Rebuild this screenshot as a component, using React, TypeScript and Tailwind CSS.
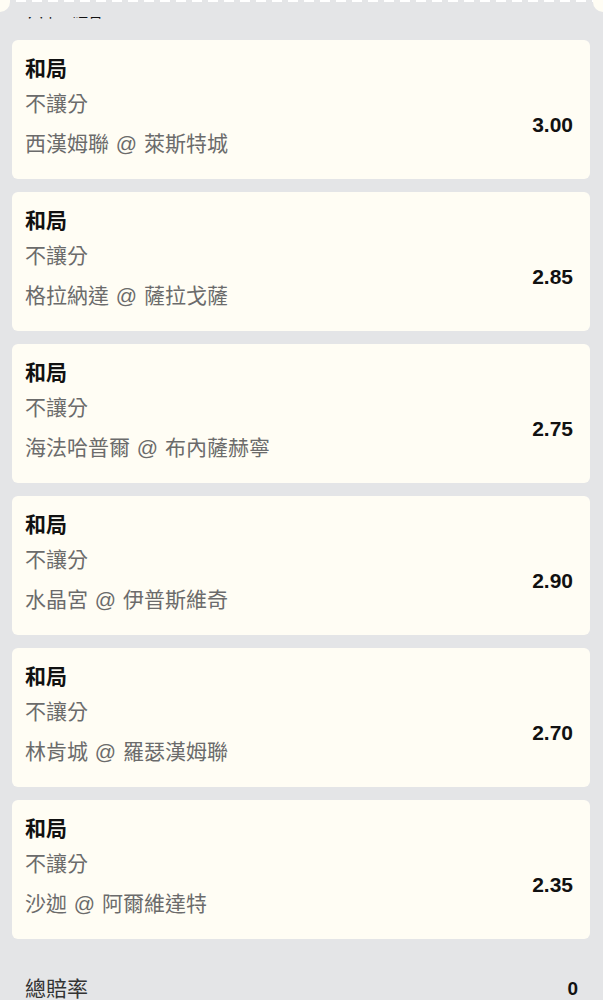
const BETS = [
  { home: '西漢姆聯', away: '萊斯特城', odds: '3.00' },
  { home: '格拉納達', away: '薩拉戈薩', odds: '2.85' },
  { home: '海法哈普爾', away: '布內薩赫寧', odds: '2.75' },
  { home: '水晶宮', away: '伊普斯維奇', odds: '2.90' },
  { home: '林肯城', away: '羅瑟漢姆聯', odds: '2.70' },
  { home: '沙迦', away: '阿爾維達特', odds: '2.35' },
];

function BetCard({ home, away, odds }: { home: string; away: string; odds: string }) {
  return (
    <div className="flex bg-[#fffdf4] rounded-[6px] pl-[13px] pr-[17px] pt-[14px] pb-[20px]">
      <div className="flex-1 min-w-0 flex flex-col">
        <div className="h-[30px] leading-[30px] text-[21px] font-bold text-[#111]">和局</div>
        <div className="h-[30px] leading-[30px] mt-[5px] text-[21px] text-[#6b6b6b]">不讓分</div>
        <div className="h-[30px] leading-[30px] mt-[10px] text-[21px] text-[#6b6b6b]">
          {home} <span className="mx-[1px]">@</span> {away}
        </div>
      </div>
      <div className="self-center mt-[36px] text-[21px] font-bold text-[#111]">{odds}</div>
    </div>
  );
}

export default function App() {
  return (
    <div
      className="relative w-[603px] h-[1000px] overflow-hidden bg-[#e4e5e7]"
      style={{ fontFamily: '"Liberation Sans", "Noto Sans CJK TC", sans-serif' }}
    >
      {/* ticket edge */}
      <div className="absolute top-0 left-0 right-0 h-[2px] bg-[repeating-linear-gradient(90deg,#ffffff_0px,#ffffff_10px,transparent_10px,transparent_16px)]" />
      <div className="absolute -top-[8px] -left-[10px] w-[20px] h-[20px] rounded-full bg-[#fffdf4]" />
      <div className="absolute -top-[8px] -right-[10px] w-[20px] h-[20px] rounded-full bg-[#fffdf4]" />

      <div className="h-[40px] pt-[17px] pl-[28px]">
        <div className="h-[4px] overflow-hidden">
          <div className="-mt-[14px] text-[15px] leading-[18px] text-[#111]">六串一組合</div>
        </div>
      </div>

      <div className="flex flex-col gap-[13px] px-[12px] pr-[13px]">
        {BETS.map((b, i) => (
          <BetCard key={i} {...b} />
        ))}
      </div>

      <div className="flex items-center justify-between pl-[25px] pr-[25px] mt-[34px]">
        <span className="text-[21px] text-[#333]">總賠率</span>
        <span className="text-[19px] font-bold text-[#111]">0</span>
      </div>
    </div>
  );
}
